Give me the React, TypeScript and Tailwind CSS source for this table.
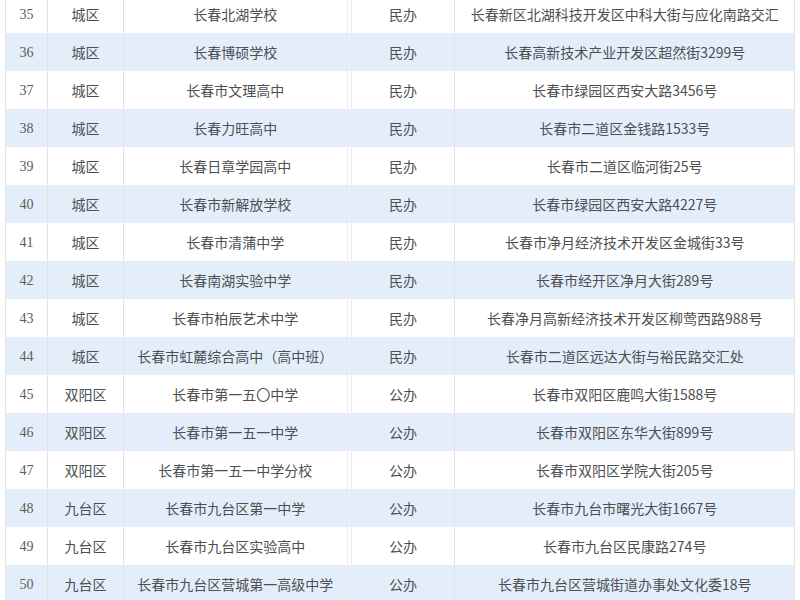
import React from "react";

const rows: [string, string, string, string, string][] = [
  ["35", "城区", "长春北湖学校", "民办", "长春新区北湖科技开发区中科大街与应化南路交汇"],
  ["36", "城区", "长春博硕学校", "民办", "长春高新技术产业开发区超然街3299号"],
  ["37", "城区", "长春市文理高中", "民办", "长春市绿园区西安大路3456号"],
  ["38", "城区", "长春力旺高中", "民办", "长春市二道区金钱路1533号"],
  ["39", "城区", "长春日章学园高中", "民办", "长春市二道区临河街25号"],
  ["40", "城区", "长春市新解放学校", "民办", "长春市绿园区西安大路4227号"],
  ["41", "城区", "长春市清蒲中学", "民办", "长春市净月经济技术开发区金城街33号"],
  ["42", "城区", "长春南湖实验中学", "民办", "长春市经开区净月大街289号"],
  ["43", "城区", "长春市柏辰艺术中学", "民办", "长春净月高新经济技术开发区柳莺西路988号"],
  ["44", "城区", "长春市虹麓综合高中（高中班）", "民办", "长春市二道区远达大街与裕民路交汇处"],
  ["45", "双阳区", "长春市第一五〇中学", "公办", "长春市双阳区鹿鸣大街1588号"],
  ["46", "双阳区", "长春市第一五一中学", "公办", "长春市双阳区东华大街899号"],
  ["47", "双阳区", "长春市第一五一中学分校", "公办", "长春市双阳区学院大街205号"],
  ["48", "九台区", "长春市九台区第一中学", "公办", "长春市九台市曙光大街1667号"],
  ["49", "九台区", "长春市九台区实验高中", "公办", "长春市九台区民康路274号"],
  ["50", "九台区", "长春市九台区营城第一高级中学", "公办", "长春市九台区营城街道办事处文化委18号"],
];

export default function App() {
  return (
    <div className="w-[800px] h-[600px] overflow-hidden bg-white">
      <div
        className="ml-[5px] w-[790px] -mt-[5px] border-l border-[#dfe4ea] text-[14px] text-[#4d4f52]"
        style={{ fontFamily: '"Noto Sans CJK SC", "Noto Sans", sans-serif' }}
      >
        {rows.map((r, i) => (
          <div
            key={r[0]}
            className={`flex h-[38px] items-center ${i % 2 === 1 ? "bg-[#e4eefa]" : "bg-white"}`}
          >
            <div className="w-[42px] h-full flex items-center justify-center border-r border-[#dfe4ea] font-['Liberation_Serif',serif] text-[14px] text-[#5a5c60]">
              {r[0]}
            </div>
            <div className="w-[76px] h-full flex items-center justify-center border-r border-[#dfe4ea]">
              {r[1]}
            </div>
            <div className="w-[224px] h-full flex items-center justify-center border-r border-[#e6eaef] whitespace-nowrap">
              {r[2]}
            </div>
            <div className="w-[4px] h-full border-r border-[#e6eaef]" />
            <div className="w-[104px] h-full flex items-center justify-center border-r border-[#dfe4ea]">
              {r[3]}
            </div>
            <div className="w-[340px] h-full flex items-center justify-center border-r border-[#dfe4ea] whitespace-nowrap">
              {r[4]}
            </div>
          </div>
        ))}
      </div>
    </div>
  );
}
